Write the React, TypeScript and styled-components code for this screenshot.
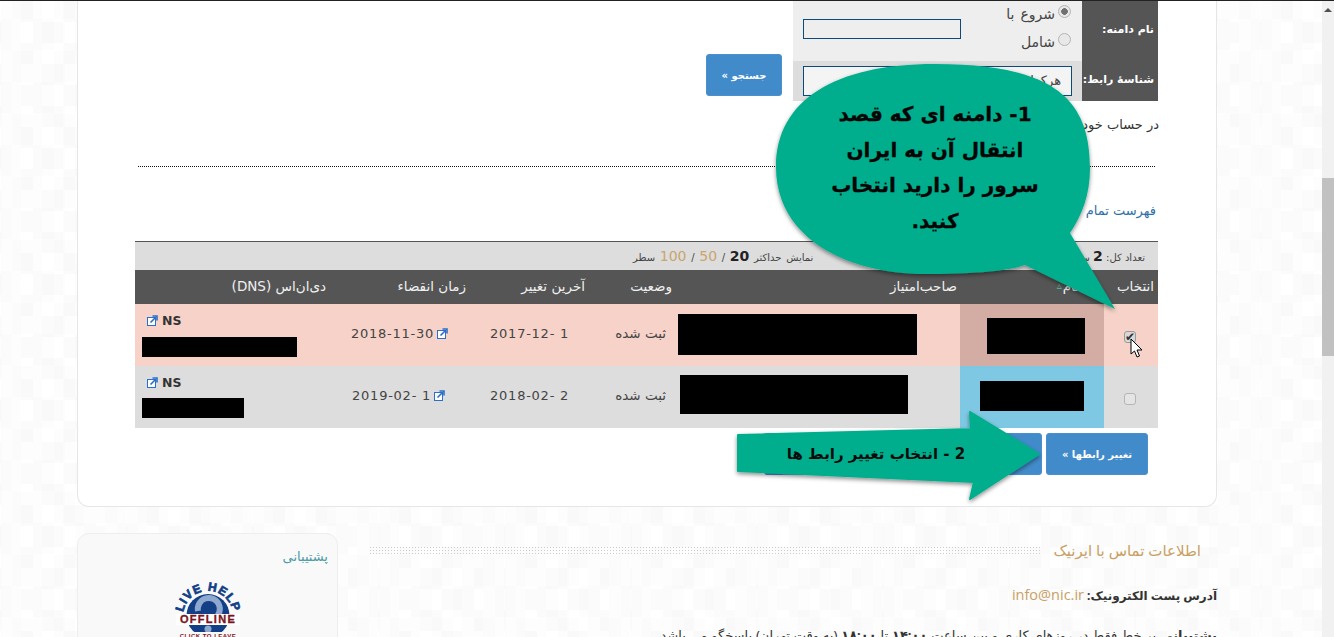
import React from "react";
import styled, { createGlobalStyle } from "styled-components";

const Global = createGlobalStyle`
  html, body { margin: 0; padding: 0; height: 100%; overflow: hidden; }
  body { font-family: "DejaVu Sans", "Noto Sans", sans-serif; color: #444; background: #fff; }
  #root { height: 100%; }
`;

const Page = styled.div`
  display: flex;
  width: 1334px;
  height: 637px;
  overflow: hidden;
  position: relative;
  border-top: 1px solid #222;
  box-sizing: border-box;
`;
const Canvas = styled.div`
  flex: 1;
  height: 636px;
  overflow: hidden;
  padding: 0 105px 0 77px;
  background-color: #fff;
  background-image:
    repeating-conic-gradient(rgba(0, 0, 0, 0.009) 0 25%, transparent 0 50%),
    repeating-conic-gradient(rgba(0, 0, 0, 0.008) 0 25%, transparent 0 50%),
    repeating-conic-gradient(rgba(0, 0, 0, 0.006) 0 25%, transparent 0 50%);
  background-size: 42px 63px, 63px 42px, 42px 42px;
  background-position: 12px 18px, 33px 0, 0 0;
`;
const Scrollbar = styled.div`
  width: 12px;
  flex: none;
  background: #f1f1f1;
  display: flex;
  flex-direction: column;
  align-items: center;
`;
const ScrollArrow = styled.div`
  margin-top: 7px;
  width: 0;
  height: 0;
  border-left: 4px solid transparent;
  border-right: 4px solid transparent;
  border-bottom: 4px solid #505050;
`;
const ScrollThumb = styled.div`
  margin-top: 166px;
  width: 12px;
  height: 178px;
  background: #c1c1c1;
`;
const Card = styled.section`
  width: 1140px;
  height: 506px;
  box-sizing: border-box;
  background: #fff;
  border: 1px solid #e6e6e6;
  border-top: 0;
  border-radius: 0 0 12px 12px;
  direction: rtl;
  padding: 0 58px 0 0;
`;
const FormRow = styled.div`
  display: flex;
  align-items: flex-start;
`;
const SearchTable = styled.div`
  width: 365px;
  font-size: 12px;
`;
const SearchRow = styled.div<{ $h: number; $bg: string }>`
  display: flex;
  height: ${(p) => p.$h}px;
  background: ${(p) => p.$bg};
`;
const SearchLabel = styled.div`
  width: 76px;
  flex: none;
  box-sizing: border-box;
  background: #555;
  color: #fff;
  font-weight: bold;
  font-size: 11px;
  white-space: nowrap;
  display: flex;
  align-items: center;
  padding: 0 4px 3px 0;
`;
const Radios = styled.div`
  width: 108px;
  flex: none;
  box-sizing: border-box;
  padding: 0 11px 0 0;
  margin-top: -1px;
`;
const RadioLine = styled.label`
  display: flex;
  height: 28px;
  align-items: center;
  gap: 3px;
  font-size: 14px;
  word-spacing: 1.5px;
  color: #444;
`;
const Radio = styled.span<{ $on?: boolean }>`
  width: 13px;
  height: 13px;
  border-radius: 50%;
  border: 1px solid #b4b4b4;
  box-sizing: border-box;
  background: ${(p) => (p.$on ? "radial-gradient(circle, #707070 0 3px, #e8e8e8 3.6px)" : "#e8e8e8")};
  flex: none;
  margin-top: -5px;
`;
const FieldCell = styled.div`
  flex: 1;
  display: flex;
  align-items: center;
  justify-content: flex-end;
  padding-left: 10px;
`;
const TextField = styled.div<{ $w: number; $h: number; $bg: string; $lift?: number }>`
  width: ${(p) => p.$w}px;
  height: ${(p) => p.$h}px;
  margin-bottom: ${(p) => p.$lift ?? 0}px;
  box-sizing: border-box;
  border: 1px solid #0d4a79;
  background: ${(p) => p.$bg};
  font-size: 13px;
  line-height: 28px;
  padding-right: 10px;
  overflow: hidden;
  white-space: nowrap;
`;
const BlueButton = styled.button<{ $w: number }>`
  width: ${(p) => p.$w}px;
  height: 42px;
  background: #428bca;
  border: 1px solid #4a90d0;
  border-radius: 3px;
  color: #fff;
  font-family: "DejaVu Sans", sans-serif;
  font-size: 10px;
  font-weight: bold;
  padding: 0;
`;
const SearchButton = styled(BlueButton)`
  margin: 53px 11px 0 0;
`;
const Note = styled.p`
  margin: 15px -1px 0 0;
  font-size: 13px;
  line-height: 17px;
  color: #333;
`;
const Dotted = styled.hr`
  margin: 33px 3px 0 3px;
  width: 1017px;
  border: 0;
  border-top: 1px dotted #111;
`;
const ListLink = styled.a`
  display: block;
  margin: 35px 2px 0 0;
  font-size: 13px;
  line-height: 17px;
  color: #2d6fa8;
`;
const Grid = styled.div`
  margin: 22px 0 0 0;
  width: 1023px;
`;
const Toolbar = styled.div`
  height: 29px;
  box-sizing: border-box;
  background: #ddd;
  border-top: 1px solid #555;
  display: flex;
  justify-content: space-between;
  align-items: center;
  padding: 0 13px 0 0;
  font-size: 10px;
  color: #444;
`;
const ToolbarEnd = styled.div`
  margin-left: 498px;
  white-space: nowrap;
  word-spacing: 1.5px;
`;
const Big = styled.b`
  font-size: 14px;
  color: #222;
`;
const Muted = styled.span`
  font-size: 14px;
  color: #c9a56f;
`;
const Row = styled.div<{ $h: number; $bg: string }>`
  display: grid;
  grid-template-columns: 54px 144px 288px 72px 130px 130px 205px;
  height: ${(p) => p.$h}px;
  background: ${(p) => p.$bg};
`;
const Head = styled.div<{ $pr?: number }>`
  display: flex;
  align-items: center;
  padding: 0 ${(p) => p.$pr ?? 0}px 3px 0;
  font-size: 13.5px;
  font-weight: normal;
  color: #f0f0f0;
  white-space: nowrap;
`;
const SortMark = styled.span`
  color: #4fc08d;
  font-size: 10px;
  margin-right: 1px;
`;
const Cell = styled.div<{ $bg?: string; $center?: boolean }>`
  display: flex;
  align-items: center;
  justify-content: ${(p) => (p.$center ? "center" : "flex-start")};
  background: ${(p) => p.$bg || "transparent"};
`;
const StatusCell = styled(Cell)`
  font-size: 13.5px;
  color: #444;
  white-space: nowrap;
  padding: 0 6px 4px 0;
`;
const Mask = styled.div<{ $w: number; $h: number; $mr?: number; $mb?: number; $mt?: number }>`
  width: ${(p) => p.$w}px;
  height: ${(p) => p.$h}px;
  margin-right: ${(p) => p.$mr ?? 0}px;
  margin-bottom: ${(p) => p.$mb ?? 0}px;
  margin-top: ${(p) => p.$mt ?? 0}px;
  background: #000;
  flex: none;
`;
const Box = styled.span<{ $on?: boolean }>`
  width: 12px;
  height: 12px;
  margin: ${(p) => (p.$on ? 4 : 3)}px 2px 0 0;
  border: 1px solid ${(p) => (p.$on ? "#999" : "#b5b5b5")};
  border-radius: 3px;
  box-sizing: border-box;
  background: ${(p) => (p.$on ? "#d8d8d8" : "#e4e4e4")};
  display: block;
  font-size: 12px;
  line-height: 10px;
  text-align: center;
  color: #333;
`;
const DateCell = styled(Cell)<{ $pr: number }>`
  padding: 0 ${(p) => p.$pr}px 4px 0;
  gap: 3px;
  font-size: 13px;
`;
const DateText = styled.span`
  direction: ltr;
  unicode-bidi: embed;
  letter-spacing: 0.75px;
  color: #444;
  white-space: pre;
`;
const DnsCell = styled(Cell)`
  flex-direction: column;
  align-items: flex-end;
  justify-content: flex-start;
  padding: 7px 0 0 7px;
`;
const NsLine = styled.div`
  display: flex;
  direction: ltr;
  align-items: center;
  gap: 4px;
  font-size: 12.5px;
  font-weight: bold;
  color: #333;
  height: 18px;
  width: 100%;
  padding-left: 5px;
  box-sizing: border-box;
`;
const Actions = styled.div`
  display: flex;
  gap: 4px;
  margin: 5px 10px 0 0;
`;
const Lower = styled.div`
  display: flex;
  height: 130px;
  direction: rtl;
  width: 1140px;
  margin-top: 26px;
  justify-content: space-between;
`;
const Contact = styled.div`
  width: 848px;
`;
const ContactHead = styled.div`
  display: flex;
  align-items: center;
  padding-right: 16px;
  gap: 13px;
  height: 34px;
`;
const ContactTitle = styled.h3`
  margin: 0;
  font-size: 15px;
  font-weight: normal;
  color: #c9a063;
  font-family: "Noto Sans", "DejaVu Sans", sans-serif;
  white-space: nowrap;
`;
const DotStrip = styled.div`
  width: 671px;
  height: 9px;
  background-image: radial-gradient(circle, #ccc 0.7px, transparent 0.8px);
  background-size: 3px 3px;
`;
const ContactLine = styled.p`
  margin: 19px 0 0;
  font-family: "Noto Sans", "DejaVu Sans", sans-serif;
  font-size: 12px;
  line-height: 18px;
  color: #333;
  white-space: nowrap;
`;
const ContactLine2 = styled(ContactLine)`
  margin-top: 21px;
  font-size: 13px;
  word-spacing: 0.5px;
`;
const Mail = styled.span`
  color: #c9a063;
  font-family: "Open Sans", sans-serif;
  font-size: 14.5px;
`;
const Support = styled.aside`
  width: 261px;
  height: 140px;
  box-sizing: border-box;
  background: #f9f9f9;
  border: 1px solid #eee;
  border-radius: 12px 12px 0 0;
  padding: 12px 9px 0 0;
`;
const SupportTitle = styled.div`
  font-family: "Noto Sans", "DejaVu Sans", sans-serif;
  font-size: 13px;
  line-height: 20px;
  color: #4d9aa6;
`;
const Logo = styled.svg`
  display: block;
  margin: 11px 80px 0 0;
  width: 80px;
  height: 70px;
`;
const Overlay = styled.svg`
  position: absolute;
  left: 0;
  top: -1px;
  width: 1334px;
  height: 637px;
  pointer-events: none;
`;
const Bubble = styled.div`
  position: absolute;
  left: 810px;
  top: 96px;
  width: 250px;
  direction: rtl;
  text-align: center;
  font-size: 20px;
  line-height: 35.5px;
  font-weight: bold;
  color: #050505;
  -webkit-text-stroke: 0.3px #050505;
  font-family: "DejaVu Sans", sans-serif;
  white-space: nowrap;
`;
const ArrowLabel = styled.div`
  position: absolute;
  left: 745px;
  top: 441px;
  width: 262px;
  direction: rtl;
  text-align: center;
  font-size: 15px;
  line-height: 24px;
  font-weight: bold;
  color: #0a0a0a;
`;
const Cursor = styled.svg`
  position: absolute;
  left: 1130px;
  top: 337px;
  width: 14px;
  height: 22px;
`;

const Ext = () => (
  <svg width="11" height="11" viewBox="0 0 11 11" style={{ flex: "none" }}>
    <rect x="0.5" y="2.5" width="8" height="8" fill="#fff" stroke="#2a6fc9" />
    <path d="M3.5 7.5 L8.5 2.5 M5.5 1 H10 V5.5" fill="none" stroke="#2a6fc9" strokeWidth="1.6" />
  </svg>
);

export default function App() {
  return (
    <Page>
      <Global />
      <Canvas>
        <Card>
          <FormRow>
            <SearchTable>
              <SearchRow $h={60} $bg="#eeeeee">
                <SearchLabel>نام دامنه:</SearchLabel>
                <Radios>
                  <RadioLine><Radio $on />شروع با</RadioLine>
                  <RadioLine><Radio />شامل</RadioLine>
                </Radios>
                <FieldCell><TextField $w={158} $h={20} $bg="#eeeeee" $lift={4} /></FieldCell>
              </SearchRow>
              <SearchRow $h={40} $bg="#dddddd">
                <SearchLabel>شناسهٔ رابط:</SearchLabel>
                <FieldCell><TextField $w={269} $h={30} $bg="#f4f4f4">هرکدام</TextField></FieldCell>
              </SearchRow>
            </SearchTable>
            <SearchButton $w={76}>جستجو »</SearchButton>
          </FormRow>
          <Note>در حساب خود</Note>
          <Dotted />
          <ListLink>فهرست تمام</ListLink>
          <Grid>
            <Toolbar>
              <span>تعداد کل: <Big>2</Big> سطر</span>
              <ToolbarEnd>نمایش حداکثر <Big>20</Big> / <Muted>50</Muted> / <Muted>100</Muted> سطر</ToolbarEnd>
            </Toolbar>
            <Row $h={34} $bg="#555">
              <Head $pr={4}>انتخاب</Head>
              <Head $pr={25}>نام<SortMark>▵</SortMark></Head>
              <Head $pr={3}>صاحب‌امتیاز</Head>
              <Head $pr={0}>وضعیت</Head>
              <Head $pr={15}>آخرین تغییر</Head>
              <Head $pr={4}>زمان انقضاء</Head>
              <Head $pr={14}>دی‌ان‌اس (DNS)</Head>
            </Row>
            <Row $h={62} $bg="#f6d2c8">
              <Cell $center><Box $on>✔</Box></Cell>
              <Cell $bg="#d3aca3"><Mask $w={98} $h={36} $mr={19} $mt={2} /></Cell>
              <Cell><Mask $w={239} $h={41} $mr={43} $mb={2} /></Cell>
              <StatusCell>ثبت شده</StatusCell>
              <DateCell $pr={31}><DateText>2017-12- 1</DateText></DateCell>
              <DateCell $pr={22}><Ext /><DateText>2018-11-30</DateText></DateCell>
              <DnsCell><NsLine><Ext />NS</NsLine><Mask $w={155} $h={20} $mt={8} /></DnsCell>
            </Row>
            <Row $h={62} $bg="#dddddd">
              <Cell $center><Box /></Cell>
              <Cell $bg="#7ec8e3"><Mask $w={104} $h={30} $mr={20} $mb={2} /></Cell>
              <Cell><Mask $w={228} $h={39} $mr={52} $mb={5} /></Cell>
              <StatusCell>ثبت شده</StatusCell>
              <DateCell $pr={31}><DateText>2018-02- 2</DateText></DateCell>
              <DateCell $pr={25}><Ext /><DateText>2019-02- 1</DateText></DateCell>
              <DnsCell><NsLine><Ext />NS</NsLine><Mask $w={102} $h={20} $mt={7} /></DnsCell>
            </Row>
          </Grid>
          <Actions>
            <BlueButton $w={102}>تغییر رابطها »</BlueButton>
            <BlueButton $w={278} />
          </Actions>
        </Card>
        <Lower>
          <Contact>
            <ContactHead>
              <ContactTitle>اطلاعات تماس با ایرنیک</ContactTitle>
              <DotStrip />
            </ContactHead>
            <ContactLine><b>آدرس پست الکترونیک:</b> <Mail>info@nic.ir</Mail></ContactLine>
            <ContactLine2><b>پشتیبانی</b> بر خط فقط در روزهای کاری و بین ساعت <b>۱۴:۰۰</b> تا <b>۱۸:۰۰</b> (به وقت تهران) پاسخگو می باشد</ContactLine2>
          </Contact>
          <Support>
            <SupportTitle>پشتیبانی</SupportTitle>
            <Logo viewBox="0 0 80 70">
              <defs>
                <path id="arc" d="M40 64 A25 25 0 1 1 40.01 64" />
              </defs>
              <circle cx="40" cy="38.5" r="21.5" fill="#123f86" />
              <path d="M30 34 A11 11 0 1 1 47 41" fill="none" stroke="#8fa8cf" strokeWidth="6" />
              <text fontFamily="Liberation Sans" fontWeight="bold" fontSize="12" fill="#123f86" stroke="#123f86" strokeWidth="0.7" letterSpacing="1">
                <textPath href="#arc" startOffset="50%" textAnchor="middle">LIVE HELP</textPath>
              </text>
              <rect x="8" y="37" width="64" height="11" fill="#fff" />
              <text x="40" y="46" textAnchor="middle" fontFamily="Liberation Sans" fontWeight="bold" fontSize="11" fill="#7a1420" stroke="#7a1420" strokeWidth="0.3" letterSpacing="1.3">OFFLINE</text>
              <circle cx="40" cy="52" r="3.5" fill="#8fa8cf" />
              <rect x="0" y="55" width="80" height="15" fill="#f9f9f9" />
              <text x="40" y="61" textAnchor="middle" fontFamily="Liberation Sans" fontWeight="bold" fontSize="6" fill="#7a1420" letterSpacing="0.5">CLICK TO LEAVE</text>
            </Logo>
          </Support>
        </Lower>
      </Canvas>
      <Scrollbar>
        <ScrollArrow />
        <ScrollThumb />
      </Scrollbar>
      <Overlay viewBox="0 0 1334 637">
        <defs>
          <filter id="sh" x="-10%" y="-10%" width="120%" height="120%">
            <feDropShadow dx="0" dy="2" stdDeviation="2" floodColor="#000" floodOpacity="0.45" />
          </filter>
        </defs>
        <path filter="url(#sh)" fill="#06ae8d" d="M935 64 C1055 64 1090 100 1090 168 C1090 195 1082 215 1070 233 L1115 309 L1025 265 C1005 272 965 274 925 274 C850 274 776 240 776 167 C776 100 835 64 935 64 Z" />
        <path filter="url(#sh)" fill="#06ae8d" strokeLinejoin="round" stroke="#06ae8d" strokeWidth="2" d="M738 435 L971 429 L970 412 L1039 454 L970 499 L974 482 L738 471 Z" />
      </Overlay>
      <Bubble>1- دامنه ای که قصد<br />انتقال آن به ایران<br />سرور را دارید انتخاب<br />کنید.</Bubble>
      <ArrowLabel>2 - انتخاب تغییر رابط ها</ArrowLabel>
      <Cursor viewBox="0 0 14 22">
        <path d="M1 1 L1 16 L4.5 13 L7 19 L9.5 18 L7 12 L12 12 Z" fill="#fff" stroke="#000" strokeWidth="1" />
      </Cursor>
    </Page>
  );
}
